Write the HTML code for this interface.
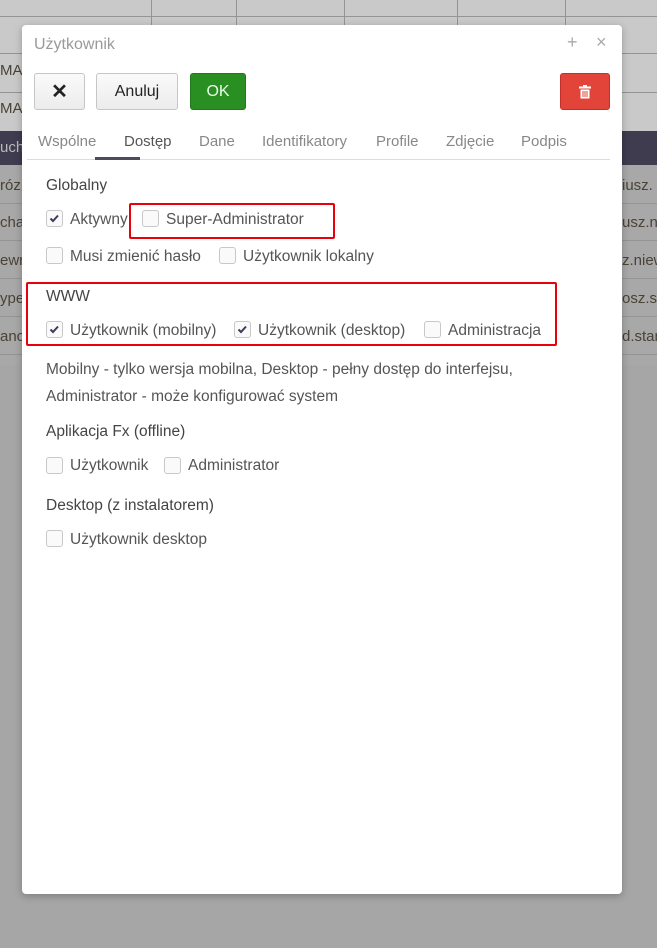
<!DOCTYPE html>
<html><head><meta charset="utf-8"><style>
body{margin:0;width:657px;height:948px;background:#a6a6a6;font-family:"Liberation Sans",sans-serif;position:relative;overflow:hidden;color:#444}
.bg{position:absolute;left:0;right:0}
.ln{position:absolute;left:0;right:0;height:1px;background:#949494}
.vl{position:absolute;top:0;height:53px;width:1px;background:#949494}
.bt{position:absolute;font-size:15px;color:#4a4236}
.modal{position:absolute;left:22px;top:25px;width:600px;height:869px;background:#fff;border-radius:4px;box-shadow:0 2px 8px rgba(0,0,0,.25)}
.abs{position:absolute}
.btn{position:absolute;top:48px;height:37px;border:1px solid #c6c6c6;border-radius:3px;background:linear-gradient(#fafafa,#ececec);box-sizing:border-box;font-size:16px;display:flex;align-items:center;justify-content:center;color:#222}
.tab{position:absolute;top:108px;font-size:15px;color:#888}
.h{position:absolute;font-size:15.5px;color:#444}
.cb{position:absolute;width:17px;height:17px;border:1px solid #c8c8c8;border-radius:3px;box-sizing:border-box;background:#fafafa}
.lab{position:absolute;font-size:15.5px;color:#555}
.red{position:absolute;border:2px solid #e8000b;border-radius:2px;box-sizing:border-box}
</style></head><body>
<div class="bg" style="top:0;height:131px;background:#c9c9c9"></div>
<div class="bg" style="top:131px;height:34px;background:#3e3c4e"></div>
<div class="bg" style="top:165px;height:200px;background:#a8a8a8"></div>
<div class="ln" style="top:16px"></div><div class="ln" style="top:53px"></div><div class="ln" style="top:92px"></div>
<div class="ln" style="top:203px"></div><div class="ln" style="top:240px"></div><div class="ln" style="top:278px"></div><div class="ln" style="top:316px"></div><div class="ln" style="top:354px"></div>
<div class="vl" style="left:151px"></div><div class="vl" style="left:236px"></div><div class="vl" style="left:344px"></div><div class="vl" style="left:457px"></div><div class="vl" style="left:565px"></div>
<div class="bt" style="left:0;top:62px">MAG</div><div class="bt" style="left:0;top:100px">MAG</div>
<div class="bt" style="left:0;top:139px;color:#bbb">uch</div>
<div class="bt" style="left:0;top:177px">róz</div><div class="bt" style="left:0;top:214px">cha</div><div class="bt" style="left:0;top:252px">ewr</div><div class="bt" style="left:0;top:290px">ype</div><div class="bt" style="left:0;top:328px">anc</div>
<div class="bt" style="left:622px;top:177px">iusz.</div><div class="bt" style="left:622px;top:214px">usz.n</div><div class="bt" style="left:622px;top:252px">z.niew</div><div class="bt" style="left:622px;top:290px">osz.sz</div><div class="bt" style="left:622px;top:328px">d.stan</div>
<div class="modal">
<div class="abs" style="left:12px;top:11px;font-size:16px;color:#999">Użytkownik</div>
<div class="abs" style="left:545px;top:7px;font-size:18px;color:#aaa">+</div>
<div class="abs" style="left:574px;top:7px;font-size:18px;color:#aaa">×</div>
<div class="btn" style="left:12px;width:51px;font-size:20px;font-weight:bold">✕</div>
<div class="btn" style="left:74px;width:82px">Anuluj</div>
<div class="btn" style="left:168px;width:56px;background:#2a8f22;border-color:#23781c;color:#e8ffe8">OK</div>
<div class="btn" style="left:538px;width:50px;background:#e2443a;border-color:#c43027;color:#fff">
<svg width="12" height="14" viewBox="0 0 12 14"><rect x="0" y="1.5" width="12" height="2" fill="#fff"/><rect x="4" y="0" width="4" height="2" fill="#fff"/><path d="M1.5 4.5h9v9h-9z" fill="#fff"/><rect x="3.5" y="6" width="1" height="6" fill="#e2443a"/><rect x="5.5" y="6" width="1" height="6" fill="#e2443a"/><rect x="7.5" y="6" width="1" height="6" fill="#e2443a"/></svg></div>
<div class="tab" style="left:16px">Wspólne</div>
<div class="tab" style="left:102px;color:#555">Dostęp</div>
<div class="tab" style="left:177px">Dane</div>
<div class="tab" style="left:240px">Identifikatory</div>
<div class="tab" style="left:354px">Profile</div>
<div class="tab" style="left:424px">Zdjęcie</div>
<div class="tab" style="left:499px">Podpis</div>
<div class="abs" style="left:5px;top:134px;width:583px;height:1px;background:#ddd"></div>
<div class="abs" style="left:73px;top:132px;width:45px;height:3px;background:#4d4b5e"></div>
<div class="h" style="left:24px;top:152px">Globalny</div>
<div class="cb" style="left:24px;top:185px"><svg width="15" height="15" viewBox="0 0 15 15"><path d="M3.5 7.5l2.5 2.5 5-5.5" stroke="#3d3b5a" stroke-width="2" fill="none"/></svg></div>
<div class="lab" style="left:48px;top:186px">Aktywny</div>
<div class="cb" style="left:120px;top:185px"></div><div class="lab" style="left:144px;top:186px">Super-Administrator</div>
<div class="red" style="left:107px;top:178px;width:206px;height:36px"></div>
<div class="cb" style="left:24px;top:222px"></div><div class="lab" style="left:48px;top:223px">Musi zmienić hasło</div>
<div class="cb" style="left:197px;top:222px"></div><div class="lab" style="left:221px;top:223px">Użytkownik lokalny</div>
<div class="red" style="left:4px;top:257px;width:531px;height:64px"></div>
<div class="h" style="left:24px;top:263px">WWW</div>
<div class="cb" style="left:24px;top:296px"><svg width="15" height="15" viewBox="0 0 15 15"><path d="M3.5 7.5l2.5 2.5 5-5.5" stroke="#3d3b5a" stroke-width="2" fill="none"/></svg></div>
<div class="lab" style="left:48px;top:297px">Użytkownik (mobilny)</div>
<div class="cb" style="left:212px;top:296px"><svg width="15" height="15" viewBox="0 0 15 15"><path d="M3.5 7.5l2.5 2.5 5-5.5" stroke="#3d3b5a" stroke-width="2" fill="none"/></svg></div>
<div class="lab" style="left:236px;top:297px">Użytkownik (desktop)</div>
<div class="cb" style="left:402px;top:296px"></div><div class="lab" style="left:426px;top:297px">Administracja</div>
<div class="lab" style="left:24px;top:331px;line-height:27px;width:520px">Mobilny - tylko wersja mobilna, Desktop - pełny dostęp do interfejsu, Administrator - może konfigurować system</div>
<div class="h" style="left:24px;top:398px">Aplikacja Fx (offline)</div>
<div class="cb" style="left:24px;top:432px"></div><div class="lab" style="left:48px;top:432px">Użytkownik</div>
<div class="cb" style="left:142px;top:432px"></div><div class="lab" style="left:166px;top:432px">Administrator</div>
<div class="h" style="left:24px;top:472px">Desktop (z instalatorem)</div>
<div class="cb" style="left:24px;top:505px"></div><div class="lab" style="left:48px;top:506px">Użytkownik desktop</div>
</div>
</body></html>
